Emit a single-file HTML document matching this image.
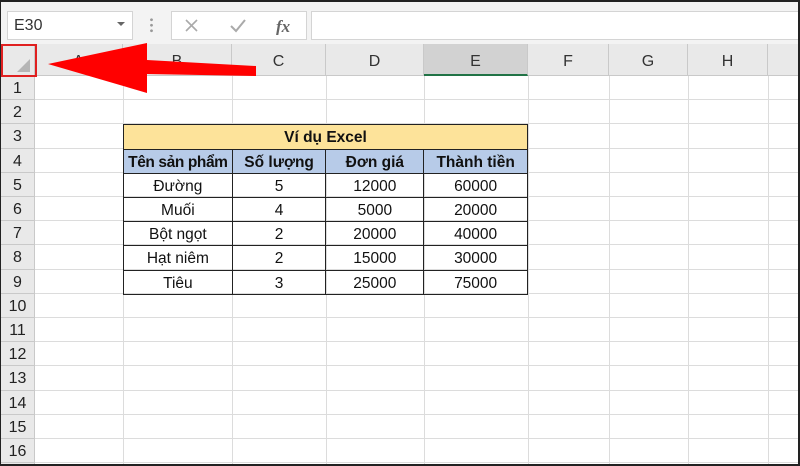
<!DOCTYPE html>
<html><head><meta charset="utf-8"><style>
*{margin:0;padding:0;box-sizing:border-box}
body{width:800px;height:466px;overflow:hidden;background:#fff;font-family:"Liberation Sans",sans-serif;position:relative}
.a{position:absolute}
.h{position:absolute;left:35px;right:0;height:1px;background:#dcdcdc}
.v{position:absolute;top:76px;bottom:0;width:1px;background:#dcdcdc}
.rn{position:absolute;left:0;width:35px;height:24.2px;text-align:center;font-size:16px;color:#222;line-height:26px;border-bottom:1px solid #c9c9c9}
.ch{position:absolute;top:44px;height:32px;font-size:16px;color:#333;text-align:center;line-height:36px;border-right:1px solid #c9c9c9}
table{position:absolute;left:123px;top:124.4px;width:405px;border-collapse:collapse;font-family:"Liberation Sans",sans-serif;font-size:15.5px;color:#111}
td{border:1px solid #222;height:24.2px;text-align:center;padding:3px 0 0 0;line-height:20px}
</style></head><body>
<div class="a" style="left:0;top:0;width:800px;height:44px;background:#f3f3f3;border-top:2px solid #222"></div>
<div class="a" style="left:7px;top:11px;width:126px;height:29px;background:#fff;border:1px solid #d4d4d4;font-size:16px;color:#333;padding:5px 0 0 6px">E30</div>
<div class="a" style="left:117px;top:22px;width:0;height:0;border-left:4px solid transparent;border-right:4px solid transparent;border-top:4px solid #666"></div>
<div class="a" style="left:150px;top:17px;width:3px;height:16px;background:radial-gradient(circle,#999 1.2px,transparent 1.6px) 0 0/3px 5.5px"></div>
<div class="a" style="left:171px;top:11px;width:136px;height:29px;background:#fff;border:1px solid #d4d4d4"></div>
<svg class="a" style="left:183px;top:17px" width="120" height="18"><path d="M3 3L14 14M14 3L3 14" stroke="#aaa" stroke-width="1.6"/><path d="M48 9L53 14L62 3" stroke="#aaa" stroke-width="2" fill="none"/><text x="93" y="15" font-family="Liberation Serif" font-style="italic" font-weight="bold" font-size="17" fill="#666">fx</text></svg>
<div class="a" style="left:311px;top:11px;width:489px;height:29px;background:#fff;border:1px solid #d4d4d4;border-right:none"></div>
<div class="a" style="left:0;top:44px;width:800px;height:32px;background:#e9e9e9;border-bottom:1px solid #c9c9c9"></div>
<div class="a" style="left:0;top:76px;width:35px;height:390px;background:#e9e9e9;border-right:1px solid #c9c9c9"></div>
<div class="ch" style="left:0;width:35px"></div>
<svg class="a" style="left:14px;top:57px" width="18" height="16"><path d="M16 2L16 15L3 15Z" fill="#b5b5b5"/></svg>
<div class="ch" style="left:35px;width:88px">A</div>
<div class="ch" style="left:123px;width:109px">B</div>
<div class="ch" style="left:232px;width:94px">C</div>
<div class="ch" style="left:326px;width:98px">D</div>
<div class="ch" style="left:424px;width:104px;background:#d2d2d2;border-bottom:2px solid #217346">E</div>
<div class="ch" style="left:528px;width:81px">F</div>
<div class="ch" style="left:609px;width:79px">G</div>
<div class="ch" style="left:688px;width:80px">H</div>
<div class="v" style="left:123px"></div><div class="v" style="left:232px"></div><div class="v" style="left:326px"></div><div class="v" style="left:424px"></div><div class="v" style="left:528px"></div><div class="v" style="left:609px"></div><div class="v" style="left:688px"></div><div class="v" style="left:768px"></div>
<div class="h" style="top:99.2px"></div><div class="h" style="top:123.4px"></div><div class="h" style="top:147.6px"></div><div class="h" style="top:171.8px"></div><div class="h" style="top:196px"></div><div class="h" style="top:220.2px"></div><div class="h" style="top:244.4px"></div><div class="h" style="top:268.6px"></div><div class="h" style="top:292.8px"></div><div class="h" style="top:317px"></div><div class="h" style="top:341.2px"></div><div class="h" style="top:365.4px"></div><div class="h" style="top:389.6px"></div><div class="h" style="top:413.8px"></div><div class="h" style="top:438px"></div><div class="h" style="top:462.2px"></div>
<div class="rn" style="top:76px">1</div><div class="rn" style="top:100.2px">2</div><div class="rn" style="top:124.4px">3</div><div class="rn" style="top:148.6px">4</div><div class="rn" style="top:172.8px">5</div><div class="rn" style="top:197px">6</div><div class="rn" style="top:221.2px">7</div><div class="rn" style="top:245.4px">8</div><div class="rn" style="top:269.6px">9</div><div class="rn" style="top:293.8px">10</div><div class="rn" style="top:318px">11</div><div class="rn" style="top:342.2px">12</div><div class="rn" style="top:366.4px">13</div><div class="rn" style="top:390.6px">14</div><div class="rn" style="top:414.8px">15</div><div class="rn" style="top:439px">16</div>
<table>
<colgroup><col style="width:109px"><col style="width:94px"><col style="width:98px"><col style="width:104px"></colgroup>
<tr><td colspan="4" style="background:#fde39a;font-weight:bold">Ví dụ Excel</td></tr>
<tr style="background:#b7cbe8;font-weight:bold"><td style="letter-spacing:-0.4px">Tên sản phẩm</td><td>Số lượng</td><td>Đơn giá</td><td>Thành tiền</td></tr>
<tr><td>Đường</td><td>5</td><td>12000</td><td>60000</td></tr>
<tr><td>Muối</td><td>4</td><td>5000</td><td>20000</td></tr>
<tr><td>Bột ngọt</td><td>2</td><td>20000</td><td>40000</td></tr>
<tr><td>Hạt niêm</td><td>2</td><td>15000</td><td>30000</td></tr>
<tr><td>Tiêu</td><td>3</td><td>25000</td><td>75000</td></tr>
</table>
<div class="a" style="left:1px;top:44px;width:36px;height:33px;border:2px solid #e02020"></div>
<svg class="a" style="left:0;top:0" width="300" height="100"><polygon points="48,64 147,43 147,60 256,66 256,76 147,74 147,93" fill="#f00"/></svg>
<div class="a" style="left:0;top:0;width:800px;height:466px;border:1px solid #222;border-top:2px solid #222;border-right:2px solid #222;border-bottom:2px solid #222"></div>
</body></html>
